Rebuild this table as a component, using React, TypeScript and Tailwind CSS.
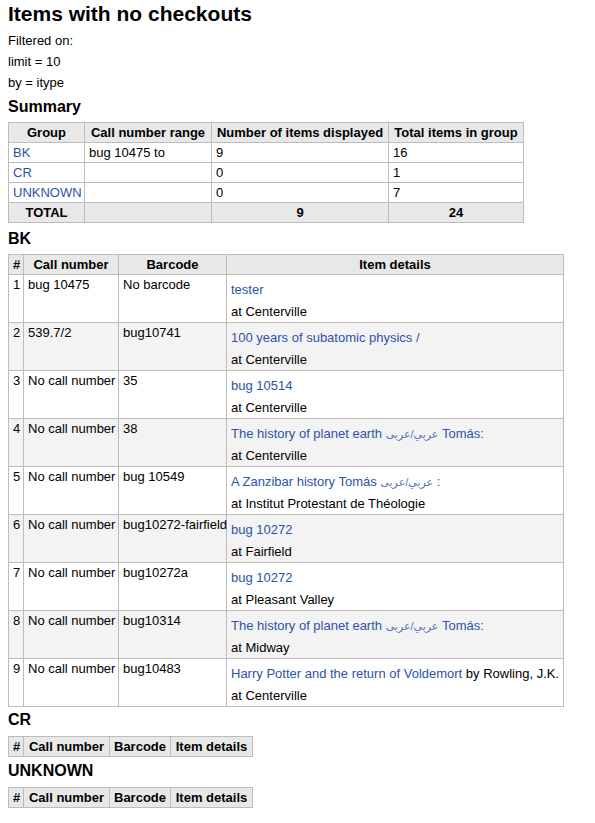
const link = "text-[#2c54a4]";

const ar = "عربي/عربى";

type Item = {
  n: number;
  call: string;
  barcode: string;
  title: React.ReactNode;
  at: string;
};

const items: Item[] = [
  { n: 1, call: "bug 10475", barcode: "No barcode", title: <span className={link}>tester</span>, at: "Centerville" },
  { n: 2, call: "539.7/2", barcode: "bug10741", title: <span className={link}>100 years of subatomic physics /</span>, at: "Centerville" },
  { n: 3, call: "No call number", barcode: "35", title: <span className={link}>bug 10514</span>, at: "Centerville" },
  {
    n: 4,
    call: "No call number",
    barcode: "38",
    title: (
      <span className={link}>
        The history of planet earth <span className="text-[11px] opacity-80">{ar}</span> Tomás:
      </span>
    ),
    at: "Centerville",
  },
  {
    n: 5,
    call: "No call number",
    barcode: "bug 10549",
    title: (
      <span className={link}>
        A Zanzibar history Tomás <span className="text-[11px] opacity-80">{ar}</span> :
      </span>
    ),
    at: "Institut Protestant de Théologie",
  },
  { n: 6, call: "No call number", barcode: "bug10272-fairfield", title: <span className={link}>bug 10272</span>, at: "Fairfield" },
  { n: 7, call: "No call number", barcode: "bug10272a", title: <span className={link}>bug 10272</span>, at: "Pleasant Valley" },
  {
    n: 8,
    call: "No call number",
    barcode: "bug10314",
    title: (
      <span className={link}>
        The history of planet earth <span className="text-[11px] opacity-80">{ar}</span> Tomás:
      </span>
    ),
    at: "Midway",
  },
  {
    n: 9,
    call: "No call number",
    barcode: "bug10483",
    title: (
      <>
        <span className={link}>Harry Potter and the return of Voldemort</span> by Rowling, J.K.
      </>
    ),
    at: "Centerville",
  },
];

const th = "border border-[#bcbcbc] bg-[#e8e8e8] font-bold text-center px-[4px] py-[2px] leading-[15px] whitespace-nowrap";
const td = "border border-[#bcbcbc] px-[4px] pt-[2px] pb-[2px] leading-[15px] align-top whitespace-nowrap";

function EmptyTable() {
  return (
    <table className="mt-[6px] border-collapse table-fixed w-[244px]">
      <colgroup>
        <col className="w-[15px]" />
        <col className="w-[86px]" />
        <col className="w-[61px]" />
        <col className="w-[82px]" />
      </colgroup>
      <thead>
        <tr>
          <th className={th}>#</th>
          <th className={th}>Call number</th>
          <th className={th}>Barcode</th>
          <th className={th}>Item details</th>
        </tr>
      </thead>
    </table>
  );
}

export default function App() {
  return (
    <div className="px-[8px] text-[13px] text-black font-['Liberation_Sans','DejaVu_Sans',Arial,sans-serif]">
      <h1 className="mt-[2px] text-[21px] leading-[24px] font-bold">Items with no checkouts</h1>
      <div className="mt-[4px]">
        <p className="leading-[21px]">Filtered on:</p>
        <p className="leading-[21px]">limit = 10</p>
        <p className="leading-[21px]">by = itype</p>
      </div>

      <h2 className="mt-[4px] text-[16px] leading-[20px] font-bold">Summary</h2>
      <table className="mt-[5px] border-collapse table-fixed w-[515px]">
        <colgroup>
          <col className="w-[76px]" />
          <col className="w-[127px]" />
          <col className="w-[177px]" />
          <col className="w-[135px]" />
        </colgroup>
        <thead>
          <tr>
            <th className={th}>Group</th>
            <th className={th}>Call number range</th>
            <th className={th}>Number of items displayed</th>
            <th className={th}>Total items in group</th>
          </tr>
        </thead>
        <tbody>
          <tr>
            <td className={td}><span className={link}>BK</span></td>
            <td className={td}>bug 10475 to</td>
            <td className={td}>9</td>
            <td className={td}>16</td>
          </tr>
          <tr>
            <td className={td}><span className={link}>CR</span></td>
            <td className={td}></td>
            <td className={td}>0</td>
            <td className={td}>1</td>
          </tr>
          <tr>
            <td className={td}><span className={link}>UNKNOWN</span></td>
            <td className={td}></td>
            <td className={td}>0</td>
            <td className={td}>7</td>
          </tr>
          <tr>
            <th className={th}>TOTAL</th>
            <th className={th}></th>
            <th className={th}>9</th>
            <th className={th}>24</th>
          </tr>
        </tbody>
      </table>

      <h2 className="mt-[6px] text-[16px] leading-[20px] font-bold">BK</h2>
      <table className="mt-[5px] border-collapse table-fixed w-[555px]">
        <colgroup>
          <col className="w-[15px]" />
          <col className="w-[95px]" />
          <col className="w-[108px]" />
          <col className="w-[337px]" />
        </colgroup>
        <thead>
          <tr>
            <th className={th}>#</th>
            <th className={th}>Call number</th>
            <th className={th}>Barcode</th>
            <th className={th}>Item details</th>
          </tr>
        </thead>
        <tbody>
          {items.map((it) => (
            <tr key={it.n} className={it.n % 2 === 0 ? "bg-[#f3f3f3]" : "bg-white"}>
              <td className={td}>{it.n}</td>
              <td className={td}>{it.call}</td>
              <td className={td}>{it.barcode}</td>
              <td className="border border-[#bcbcbc] px-[4px] pt-[4px] pb-0 align-top whitespace-nowrap">
                <div className="leading-[22px]">{it.title}</div>
                <div className="leading-[21px]">at {it.at}</div>
              </td>
            </tr>
          ))}
        </tbody>
      </table>

      <h2 className="mt-[3px] text-[16px] leading-[20px] font-bold">CR</h2>
      <EmptyTable />
      <h2 className="mt-[4px] text-[16px] leading-[20px] font-bold">UNKNOWN</h2>
      <EmptyTable />
    </div>
  );
}
